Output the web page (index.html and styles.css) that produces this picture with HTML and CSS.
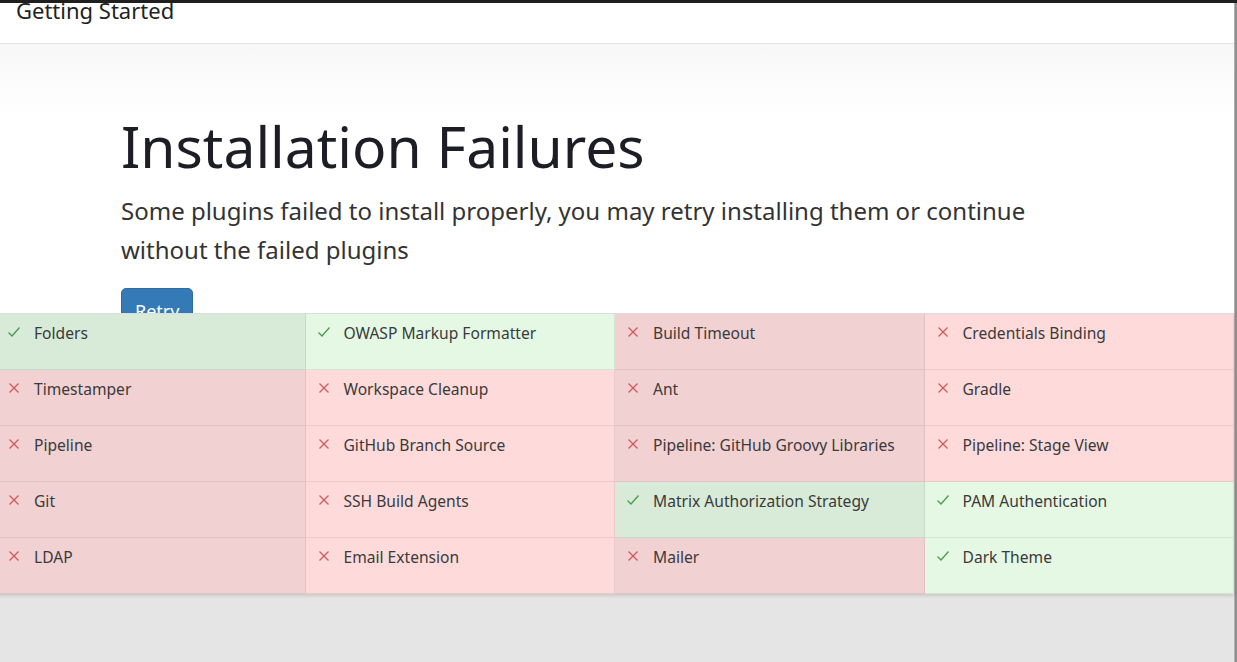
FILE: index.html
```html
<!DOCTYPE html>
<html>
<head>
<meta charset="utf-8">
<link rel="stylesheet" href="styles.css">
</head>
<body>
<div class="topbar"></div>
<div class="frame">
  <div class="main">
    <header class="header"><div class="brand">Getting Started</div></header>
    <section class="hero">
      <h1 class="title">Installation Failures</h1>
      <p class="lead">Some plugins failed to install properly, you may retry installing them or continue without the failed plugins</p>
      <button class="btn">Retry</button>
    </section>
    <div class="grid">
      <div class="cell ok c1"><svg class="ic" viewBox="0 0 14 14"><path d="M1.5 7.5 L5 11 L12.5 2.5"/></svg><span>Folders</span></div>
      <div class="cell ok c2"><svg class="ic" viewBox="0 0 14 14"><path d="M1.5 7.5 L5 11 L12.5 2.5"/></svg><span>OWASP Markup Formatter</span></div>
      <div class="cell fail c1"><svg class="ic" viewBox="0 0 14 14"><path d="M2.5 2.5 L11.5 11.5 M11.5 2.5 L2.5 11.5"/></svg><span>Build Timeout</span></div>
      <div class="cell fail c2"><svg class="ic" viewBox="0 0 14 14"><path d="M2.5 2.5 L11.5 11.5 M11.5 2.5 L2.5 11.5"/></svg><span>Credentials Binding</span></div>

      <div class="cell fail c1"><svg class="ic" viewBox="0 0 14 14"><path d="M2.5 2.5 L11.5 11.5 M11.5 2.5 L2.5 11.5"/></svg><span>Timestamper</span></div>
      <div class="cell fail c2"><svg class="ic" viewBox="0 0 14 14"><path d="M2.5 2.5 L11.5 11.5 M11.5 2.5 L2.5 11.5"/></svg><span>Workspace Cleanup</span></div>
      <div class="cell fail c1"><svg class="ic" viewBox="0 0 14 14"><path d="M2.5 2.5 L11.5 11.5 M11.5 2.5 L2.5 11.5"/></svg><span>Ant</span></div>
      <div class="cell fail c2"><svg class="ic" viewBox="0 0 14 14"><path d="M2.5 2.5 L11.5 11.5 M11.5 2.5 L2.5 11.5"/></svg><span>Gradle</span></div>

      <div class="cell fail c1"><svg class="ic" viewBox="0 0 14 14"><path d="M2.5 2.5 L11.5 11.5 M11.5 2.5 L2.5 11.5"/></svg><span>Pipeline</span></div>
      <div class="cell fail c2"><svg class="ic" viewBox="0 0 14 14"><path d="M2.5 2.5 L11.5 11.5 M11.5 2.5 L2.5 11.5"/></svg><span>GitHub Branch Source</span></div>
      <div class="cell fail c1"><svg class="ic" viewBox="0 0 14 14"><path d="M2.5 2.5 L11.5 11.5 M11.5 2.5 L2.5 11.5"/></svg><span>Pipeline: GitHub Groovy Libraries</span></div>
      <div class="cell fail c2"><svg class="ic" viewBox="0 0 14 14"><path d="M2.5 2.5 L11.5 11.5 M11.5 2.5 L2.5 11.5"/></svg><span>Pipeline: Stage View</span></div>

      <div class="cell fail c1"><svg class="ic" viewBox="0 0 14 14"><path d="M2.5 2.5 L11.5 11.5 M11.5 2.5 L2.5 11.5"/></svg><span>Git</span></div>
      <div class="cell fail c2"><svg class="ic" viewBox="0 0 14 14"><path d="M2.5 2.5 L11.5 11.5 M11.5 2.5 L2.5 11.5"/></svg><span>SSH Build Agents</span></div>
      <div class="cell ok c1"><svg class="ic" viewBox="0 0 14 14"><path d="M1.5 7.5 L5 11 L12.5 2.5"/></svg><span>Matrix Authorization Strategy</span></div>
      <div class="cell ok c2"><svg class="ic" viewBox="0 0 14 14"><path d="M1.5 7.5 L5 11 L12.5 2.5"/></svg><span>PAM Authentication</span></div>

      <div class="cell fail c1"><svg class="ic" viewBox="0 0 14 14"><path d="M2.5 2.5 L11.5 11.5 M11.5 2.5 L2.5 11.5"/></svg><span>LDAP</span></div>
      <div class="cell fail c2"><svg class="ic" viewBox="0 0 14 14"><path d="M2.5 2.5 L11.5 11.5 M11.5 2.5 L2.5 11.5"/></svg><span>Email Extension</span></div>
      <div class="cell fail c1"><svg class="ic" viewBox="0 0 14 14"><path d="M2.5 2.5 L11.5 11.5 M11.5 2.5 L2.5 11.5"/></svg><span>Mailer</span></div>
      <div class="cell ok c2"><svg class="ic" viewBox="0 0 14 14"><path d="M1.5 7.5 L5 11 L12.5 2.5"/></svg><span>Dark Theme</span></div>
    </div>
    <div class="footer-space"></div>
  </div>
  <div class="scroll"></div>
</div>
</body>
</html>
```

FILE: styles.css
```css
* { box-sizing: border-box; }
html, body { margin: 0; padding: 0; }
body {
  width: 1237px;
  height: 662px;
  overflow: hidden;
  font-family: "Noto Sans", "Open Sans", sans-serif;
  color: #333;
  background: #e5e5e5;
}
.topbar { height: 3px; background: #1f1f1f; }
.frame { display: flex; height: 659px; }
.main { flex: 1; min-width: 0; display: flex; flex-direction: column; background: #e5e5e5; }
.scroll { width: 3px; flex: none; background: #8f8f8f; border-left: 1px solid #b0b0b0; }

.header {
  height: 41px;
  background: #fff;
  border-bottom: 1px solid #e3e3e3;
  overflow: hidden;
}
.brand {
  margin-top: -4px;
  padding-left: 16px;
  font-size: 22px;
  line-height: 22px;
  color: #222;
}

.hero {
  height: 269px;
  overflow: hidden;
  background: linear-gradient(#f7f7f7 0px, #fdfdfd 50px, #fff 80px);
  padding: 62px 0 0 121px;
}
.title {
  margin: 0;
  font-weight: 400;
  font-size: 57px;
  line-height: 80px;
  color: #1d1d26;
}
.lead {
  margin: 5px 0 0;
  width: 980px;
  font-size: 24px;
  line-height: 39px;
  color: #333;
}
.btn {
  margin-top: 19px;
  height: 46px;
  padding: 0 13px;
  border: 1px solid #2e6da4;
  border-radius: 5px;
  background: #337ab7;
  color: #fff;
  font-family: inherit;
  font-size: 18px;
}

.grid {
  display: grid;
  width: 1238px;
  margin-left: -4px;
  grid-template-columns: repeat(4, 1fr);
  grid-auto-rows: 56px;
  border-top: 1px solid #dcdcdc;
  box-shadow: 0 2px 3px rgba(0,0,0,0.12);
  position: relative;
}
.cell {
  display: flex;
  align-items: flex-start;
  padding: 9px 0 0 11px;
  font-size: 15.6px;
  line-height: 20px;
  color: #3a3a3a;
  border-right: 1px solid rgba(0,0,0,0.07);
  border-bottom: 1px solid rgba(0,0,0,0.07);
}
.cell span { margin-left: 13px; }
.ic {
  width: 14px;
  height: 14px;
  margin-top: 2px;
  flex: none;
  fill: none;
  stroke-width: 1.3;
}
.ok .ic { stroke: #4c9a4c; }
.fail .ic { stroke: #d05a5a; }
.ok.c1 { background: #d8ebd8; }
.ok.c2 { background: #e4f8e4; }
.fail.c1 { background: #f2d1d3; }
.fail.c2 { background: #fedadb; }

.footer-space { flex: 1; }
```
